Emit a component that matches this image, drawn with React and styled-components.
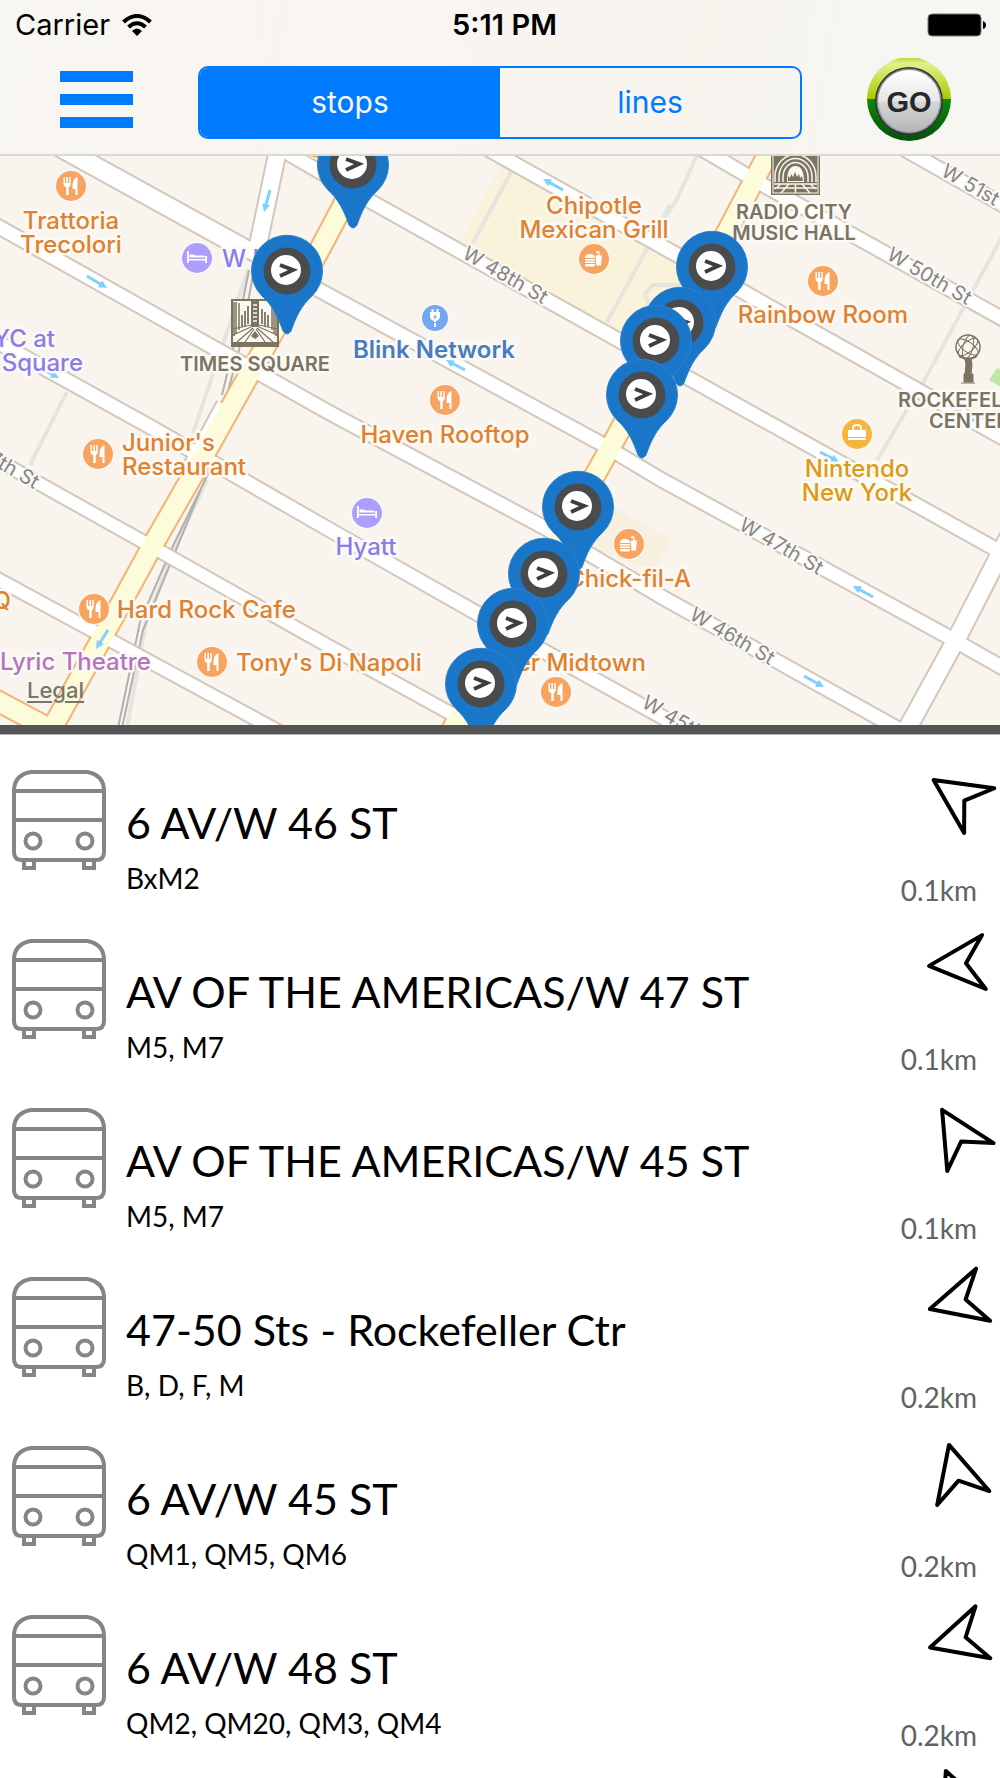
import React, { useState } from "react";
import styled, { createGlobalStyle } from "styled-components";

const GlobalStyle = createGlobalStyle`
  *, *::before, *::after { box-sizing: border-box; }
  body { margin: 0; background: #fff; overflow-x: hidden; }
`;

const ui = `Inter, Roboto, "Liberation Sans", sans-serif`;
const book = `Lato, "Open Sans", "Liberation Sans", sans-serif`;

const Screen = styled.div`
  height: 100vh;
  overflow: hidden;
  display: flex;
  flex-direction: column;
  background: #fff;
`;

const Header = styled.header`
  flex: none;
  background: linear-gradient(100deg, #f8f6f0, #f8f5f2 40%, #f8f5ef 70%, #f7f6f3);
  border-bottom: 2px solid #dad8d4;
`;

const StatusBar = styled.div`
  height: 50px;
  padding: 0 14px 0 15px;
  display: grid;
  grid-template-columns: 1fr auto 1fr;
  align-items: center;
  font: 400 29px/50px ${ui};
  color: #000;
`;

const Carrier = styled.span`
  display: flex;
  align-items: center;
  gap: 12px;
`;

const Clock = styled.time`
  margin-left: 8px;
  font-weight: 600;
`;

const BatteryIcon = styled.svg`
  justify-self: end;
`;

const Toolbar = styled.div`
  height: 104px;
  display: grid;
  grid-template-columns: 198px 1fr 198px;
  align-items: center;
`;

const MenuButton = styled.button`
  justify-self: start;
  margin: 0 0 6px 60px;
  padding: 0;
  border: 0;
  background: none;
  display: flex;
  flex-direction: column;
  gap: 12px;
  width: 73px;
`;

const MenuBar = styled.span`
  height: 11px;
  background: #007aff;
`;

const Segments = styled.div`
  height: 73px;
  display: grid;
  grid-template-columns: 1fr 1fr;
  border: 2px solid #007aff;
  border-radius: 10px;
  overflow: hidden;
`;

const Segment = styled.button`
  border: 0;
  padding: 0;
  font: 400 30px/36px ${ui};
  color: ${(p) => (p.$on ? "#f8f6f2" : "#007aff")};
  background: ${(p) => (p.$on ? "#007aff" : "transparent")};
`;

const GoButton = styled.button`
  justify-self: center;
  margin: 0 0 3px 16px;
  padding: 0;
  border: 0;
  background: none;
  display: flex;
`;

const MapPanel = styled.section`
  flex: none;
  position: relative;
  height: 569px;
  background: #f9f5ee;
`;

const MapDrawing = styled.svg`
  display: block;
  width: 100%;
  height: 100%;
  font-family: ${ui};
`;

const Legal = styled.a`
  position: absolute;
  left: 27px;
  bottom: 21px;
  font: 500 22px/28px ${ui};
  color: #77756d;
  text-decoration: underline;
  text-underline-offset: 3px;
`;

const Divider = styled.div`
  flex: none;
  height: 10px;
  background: #545454;
  border-bottom: 1px solid #b5b5b5;
`;

const StopList = styled.ul`
  flex: 1;
  min-height: 0;
  overflow: hidden;
  margin: 0;
  padding: 0;
  list-style: none;
  font-family: ${book};
`;

const StopRow = styled.li`
  height: 169px;
  padding: 30px 5px 0 10px;
  display: grid;
  grid-template-columns: 97px 1fr 100px;
  column-gap: 19px;
`;

const BusIcon = styled.svg`
  margin-top: 5px;
`;

const StopText = styled.div`
  padding-top: 30px;
  min-width: 0;
`;

const StopName = styled.h2`
  margin: 0;
  font-weight: 400;
  font-size: 43px;
  line-height: 56px;
  color: #000;
  white-space: nowrap;
`;

const StopLines = styled.p`
  margin: 0;
  font-weight: 400;
  font-size: 28px;
  line-height: 54px;
  color: #000;
`;

const Side = styled.div`
  display: flex;
  flex-direction: column;
`;

const Needle = styled.svg`
  flex: none;
  margin: ${(p) => -10 - p.$lift}px -1px 0 21px;
  overflow: visible;
`;

const Distance = styled.span`
  margin-top: 37px;
  margin-right: 18px;
  text-align: right;
  font-weight: 400;
  font-size: 28px;
  line-height: 36px;
  color: #626262;
`;

const stops = [
  { name: "6 AV/W 46 ST", lines: "BxM2", far: "0.1km", turn: -56 },
  { name: "AV OF THE AMERICAS/W 47 ST", lines: "M5, M7", far: "0.1km", turn: -94 },
  { name: "AV OF THE AMERICAS/W 45 ST", lines: "M5, M7", far: "0.1km", turn: -31 },
  { name: "47-50 Sts - Rockefeller Ctr", lines: "B, D, F, M", far: "0.2km", turn: -105 },
  { name: "6 AV/W 45 ST", lines: "QM1, QM5, QM6", far: "0.2km", turn: -15 },
  { name: "6 AV/W 48 ST", lines: "QM2, QM20, QM3, QM4", far: "0.2km", turn: -106 },
  { turn: -22, lift: 13 },
];

/* ---------- map data ---------- */

const streets = [
  ["40,136 330,296 600,443 660,479 945,635 1010,672", 15],
  ["40,136 250,252", 20],
  ["-10,222 330,413 547,529 660,596 920,741", 15],
  ["-10,338 147,425 330,530 480,615 547,653 700,738", 15],
  ["-10,456 140,540 330,647 450,713 480,730", 14],
  ["-10,575 95,632 300,743", 14],
  ["255,134 370,201 622,342 690,379 990,546 1010,557", 15],
  ["470,139 670,251 740,290 1010,442", 15],
  ["690,142 765,186 1010,323", 15],
  ["890,141 1010,209", 15],
  ["279,145 257,250", 18],
  ["1015,525 957,638 900,742", 19],
  ["225,405 190,470", 18],
];

const avenues = [
  "375,145 321,247 265,347 245,382 190,480 155,541 102,638 50,732",
  "-10,697 50,729",
  "770,150 728,230 608,452 561,535 450,733",
];

const paths = [
  "248,270 193,433",
  "67,392 30,465",
  "512,170 473,243",
  "670,205 648,247 607,322",
  "680,285 653,285 645,294 649,306",
  "697,155 678,197 664,220",
  "1004,233 923,383 877,460",
  "207,480 174,550 146,622 127,728",
];

const arrows = [
  [270, 190, 264, 212],
  [87, 276, 107, 288],
  [40, 368, 59, 378],
  [563, 190, 543, 179],
  [465, 370, 446, 360],
  [108, 630, 96, 649],
  [820, 452, 839, 462],
  [873, 597, 853, 586],
  [804, 676, 824, 687],
  [975, 421, 953, 410],
];

const streetNames = [
  ["W 48th St", 506, 274],
  ["W 47th St", 782, 545],
  ["W 46th St", 733, 635],
  ["W 45th St", 685, 723],
  ["W 50th St", 930, 275],
  ["W 51st St", 982, 190],
  ["W 47th St", -2, 459],
];

const food = "#e0812f";
const hotel = "#8b7ce8";
const sight = "#7b7461";

const labels = [
  [["Trattoria", "Trecolori"], 71, 229, "middle", food],
  [["W H"], 222, 267, "start", hotel],
  [["YC at"], 55, 347, "end", hotel],
  [["Square"], 83, 371, "end", hotel],
  [["Blink Network"], 434, 358, "middle", "#4a7cc0", 600],
  [["Haven Rooftop"], 445, 443, "middle", food],
  [["Junior's", "Restaurant"], 122, 451, "start", food],
  [["Chipotle", "Mexican Grill"], 594, 214, "middle", food],
  [["Rainbow Room"], 823, 323, "middle", food],
  [["Nintendo", "New York"], 857, 477, "middle", "#dc9a12"],
  [["Hyatt"], 366, 555, "middle", hotel],
  [["Hard Rock Cafe"], 117, 618, "start", food],
  [["Tony's Di Napoli"], 236, 671, "start", food],
  [["Lyric Theatre"], 0, 670, "start", "#b673c0"],
  [["Q"], 11, 609, "end", food],
  [["Chick-fil-A"], 691, 587, "end", food],
  [["er Midtown"], 646, 671, "end", food],
  [["TIMES SQUARE"], 255, 371, "middle", sight, 600, 20],
  [["RADIO CITY", "MUSIC HALL"], 794, 219, "middle", sight, 600, 20],
  [["ROCKEFELLER"], 898, 407, "start", sight, 600, 20],
  [["CENTER"], 929, 428, "start", sight, 600, 20],
];

const pois = [
  ["fork", 71, 186], ["fork", 445, 400], ["fork", 98, 454], ["fork", 823, 281],
  ["fork", 94, 609], ["fork", 212, 662], ["fork", 556, 692],
  ["burger", 594, 259], ["burger", 629, 544],
  ["bed", 197, 258], ["bed", 367, 513],
  ["plug", 435, 318], ["bag", 857, 434], ["bag", 318, 143],
];

const pins = [
  [353, 165], [287, 271], [712, 267], [680, 323], [656, 341],
  [642, 395], [578, 507], [544, 574], [513, 624], [481, 684],
];

const poiColor = { fork: "#f7a461", burger: "#f7a461", bed: "#ac9ffb", plug: "#73a7f0", bag: "#f6b63e" };

const Glyph = ({ kind }) => {
  if (kind === "fork")
    return (
      <g fill="#fff">
        <path d="M-7.500-9h1.500v6h1.300v-6h1.600v6h1.300v-6h1.500v7q0 2.500-2 3.200v7.800h-2.500v-7.800q-2.700-.7-2.700-3.200z" />
        <path d="M6.500-9v18h-2v-6h-3v-3q0-7 5-9z" />
      </g>
    );
  if (kind === "burger")
    return (
      <g fill="#fff">
        <path d="M-9-1q0-4 5-4t5 4zM-9 0h10v1.500h-10zM-9 2.500h10v1.500h-10zM-9 5h10v1q0 1.500-1.500 1.500h-7q-1.500 0-1.500-1.500z" />
        <path d="M1.500-3.500h6.500l-1 10h-4.500z" />
        <path d="M5-3l-.5-4h-2.500" fill="none" stroke="#fff" strokeWidth="1.500" />
      </g>
    );
  if (kind === "bed")
    return (
      <g fill="#fff">
        <path d="M-10-7h1.800v8h16.400v-3h1.800v7h-1.800v-2.500h-16.400v2.500h-1.800z" />
        <path d="M-7.500-3.500h4.500l1 1h8q2 0 2 2h-15.500z" />
      </g>
    );
  if (kind === "plug")
    return (
      <g fill="#fff">
        <path d="M-3.500-9h2v3h3v-3h2v3h1.500v4q0 4-4 5v1h-2v-1q-4-1-4-5v-4h1.500zM-1 5h2v4h-2z" />
        <path d="M1-4.500l-3 4h2l-1 3 3-4h-2z" fill="#73a7f0" />
      </g>
    );
  return (
    <g fill="#fff">
      <path d="M-9-4h18v7h-18zM-9 4h18v2h-18z" />
      <path d="M-4-4v-2q0-3 4-3t4 3v2" fill="none" stroke="#fff" strokeWidth="1.800" />
    </g>
  );
};

const TimesSquare = () => (
  <g transform="translate(231 299)">
    <rect width="48" height="48" fill={sight} />
    <rect x="2" y="2" width="44" height="41" fill="#fbf8f1" />
    <g stroke={sight} fill="none">
      <path d="M3 3v34M5 3v32M8 4v27M41 4v27M43 3v32M45 3v34" strokeWidth="1.500" />
      <path d="M11 16v12M14 12v15M17 7v18M31 10v15M34 13v14M37 16v12" strokeWidth="1.800" />
      <path d="M2 30l18-4M46 30l-18-4M2 36l18-8M46 36l-18-8M6 43l16-14M42 43L26 29M14 43l9-13M34 43l-9-13" strokeWidth="1.200" />
    </g>
    <path d="M20 2h8v26h-8z" fill={sight} />
    <path d="M22 6h4M22 10h4M22 14h4M22 18h4M22 22h4" stroke="#fbf8f1" strokeWidth="1.500" />
    <path d="M20 37l4-5 4 5-4 3z" fill={sight} />
  </g>
);

const RadioCity = () => (
  <g transform="translate(771 147)">
    <rect width="49" height="48" fill={sight} />
    <rect x="2" y="2" width="45" height="44" fill="none" stroke="#fbf8f1" strokeWidth="1" />
    <g fill="none" stroke="#fbf8f1" strokeWidth="1.500">
      <path d="M4 35V30a20 22 0 0 1 41 0V35M8 35V30a16 18 0 0 1 33 0V35M12 35V30a12 14 0 0 1 25 0V35" />
      <path d="M3 37h43M3 41h43M18 37l-8 9M31 37l8 9M24.500 37v9M10 37l-6 5M39 37l6 5" />
    </g>
    <path d="M16 35q0-16 8.500-16t8.500 16z" fill="#fbf8f1" />
    <path d="M17 34v-5l2 2 1-4 2 3 2-5 2 5 2-3 1 4 2-2 1 5z" fill={sight} />
  </g>
);

const Atlas = () => (
  <g transform="translate(968 347)" fill="none" stroke={sight} strokeWidth="1">
    <circle r="12" fill="#fbf8f1" strokeWidth="1.500" />
    <ellipse rx="12" ry="5" transform="rotate(35)" />
    <ellipse rx="12" ry="5" transform="rotate(-40)" />
    <ellipse rx="5" ry="12" transform="rotate(15)" />
    <path d="M-9 9L0 13L9 9" strokeWidth="2" />
    <path d="M-3 11h6l1 7-1 9h-6l1-9z" fill={sight} />
    <path d="M-4 27h9v8h-9z" fill={sight} />
    <path d="M-7 36h14" />
  </g>
);

const CityMap = () => (
  <MapDrawing viewBox="0 156 1000 569" preserveAspectRatio="xMidYMid slice" role="img" aria-label="Stops near Times Square">
    <rect x="-500" y="100" width="2000" height="700" fill="#f9f5ee" />
    <polygon points="502,165 700,265 640,350 460,242" fill="#faf2db" />
    <polygon points="600,500 672,540 654,572 585,545" fill="#f7efe0" />
    <polygon points="997,368 989,380 1004,389 1012,374" fill="#bfe8a8" />
    <g fill="none" stroke="#e4e6dd" strokeWidth="4">
      {paths.map((d) => <polyline key={d} points={d} />)}
    </g>
    <g fill="none" stroke="#b1b0ae" strokeWidth="2">
      <path d="M249 270L234 345L222 395M254 270L239 350L227 395" />
      <path d="M210 470L171 550L140 622L118 728M207 474L176 550L143 630L122 728" />
    </g>
    <g fill="none" stroke="#d1c7bc" strokeLinejoin="round">
      {streets.map(([d, w]) => <polyline key={d} points={d} strokeWidth={w + 2} />)}
    </g>
    <g fill="none" stroke="#f6b273" strokeLinejoin="miter">
      {avenues.map((d) => <polyline key={d} points={d} strokeWidth="23" />)}
    </g>
    <g fill="none" stroke="#fff" strokeLinejoin="round">
      {streets.map(([d, w]) => <polyline key={d} points={d} strokeWidth={w - 2} />)}
    </g>
    <g fill="none" stroke="#fcfbda" strokeLinejoin="miter">
      {avenues.map((d) => <polyline key={d} points={d} strokeWidth="19" />)}
    </g>
    <g stroke="#80d0ff" fill="#80d0ff" strokeWidth="3">
      {arrows.map(([x1, y1, x2, y2]) => (
        <g key={`${x1}-${y1}`} transform={`translate(${x2} ${y2}) rotate(${(Math.atan2(y2 - y1, x2 - x1) * 180) / Math.PI})`}>
          <path d={`M${-Math.hypot(x2 - x1, y2 - y1)} 0H-5`} />
          <path d="M0 0L-8 -4V4Z" stroke="none" />
        </g>
      ))}
    </g>
    <g fill="#858585" fontSize="20" stroke="#fbf9f5" strokeWidth="4" paintOrder="stroke" textAnchor="middle">
      {streetNames.map(([t, x, y]) => (
        <text key={t + x} transform={`translate(${x} ${y}) rotate(30)`} dy="8">{t}</text>
      ))}
    </g>
    <TimesSquare />
    <RadioCity />
    <Atlas />
    {pois.map(([kind, x, y]) => (
      <g key={`${x}-${y}`} transform={`translate(${x} ${y})`}>
        <circle r={kind === "plug" ? 13 : 15} fill={poiColor[kind]} stroke="#fdfbf8" strokeWidth="2" paintOrder="stroke" />
        <Glyph kind={kind} />
      </g>
    ))}
    <g stroke="#fcfaf6" strokeWidth="5" strokeLinejoin="round" paintOrder="stroke">
      {labels.map(([lines, x, y, anchor, fill, weight = 500, size = 24]) => (
        <text key={lines[0]} y={y} textAnchor={anchor} fill={fill} fontWeight={weight} fontSize={size}>
          {lines.map((line, i) => (
            <tspan key={line} x={x} dy={i ? (size === 24 ? 24 : 21) : 0}>{line}</tspan>
          ))}
        </text>
      ))}
    </g>
    {pins.map(([x, y]) => (
      <g key={`${x}-${y}`} transform={`translate(${x} ${y})`}>
        <path
          d="M-25 25A35.500 35.500 0 1 1 25 25C14 35 9 46 4 60Q0 66 -4 60C-9 46 -14 35 -25 25Z"
          fill="#1976c8"
          stroke="#2a83d0"
          strokeWidth="1"
        />
        <circle r="23.500" fill="#4a4b4d" />
        <circle cx="-1" cy="-1" r="15" fill="#fff" />
        <path d="M-7 -6L6 -1L-7 5" fill="none" stroke="#3d3e40" strokeWidth="4" />
      </g>
    ))}
  </MapDrawing>
);

const GoBadge = () => (
  <svg width="84" height="86" viewBox="-42 -43 84 86" aria-hidden="true">
    <defs>
      <linearGradient id="lime" x1="0" y1="0" x2="0" y2="1">
        <stop offset="0" stopColor="#b5d334" />
        <stop offset=".15" stopColor="#e2f08c" />
        <stop offset="1" stopColor="#a5cc00" />
      </linearGradient>
      <linearGradient id="forest" x1="0" y1="0" x2="0" y2="1">
        <stop offset="0" stopColor="#0a8a0a" />
        <stop offset="1" stopColor="#04500c" />
      </linearGradient>
      <linearGradient id="silver" x1="0" y1="0" x2="0" y2="1">
        <stop offset="0" stopColor="#ffffff" />
        <stop offset=".5" stopColor="#e6e6e6" />
        <stop offset=".52" stopColor="#d6d6d6" />
        <stop offset="1" stopColor="#b4b6b6" />
      </linearGradient>
    </defs>
    <path d="M-42 -2A42 42 0 0 1 42 -2Z" fill="url(#lime)" />
    <path d="M-42 -2A42 42 0 1 0 42 -2Z" fill="url(#forest)" />
    <circle r="34" fill="#2f3134" />
    <circle r="32.500" fill="#8c8e92" />
    <circle r="31" fill="url(#silver)" />
    <text y="11" textAnchor="middle" fontFamily="Liberation Sans, Arial, sans-serif" fontWeight="700" fontSize="29" fill="#27282a">GO</text>
  </svg>
);

const Bus = () => (
  <BusIcon width="97" height="102" viewBox="0 0 97 102" fill="none" stroke="#858585" strokeWidth="4" aria-hidden="true">
    <path d="M21 2H77Q94 5 94 21V82Q94 90 86 90H12Q4 90 4 82V21Q4 5 21 2Z" />
    <path d="M4 21H94M4 50H94" />
    <circle cx="23" cy="71" r="7.500" />
    <circle cx="75" cy="71" r="7.500" />
    <path d="M14 90V98H24V90M74 90V98H84V90" />
  </BusIcon>
);

export default function App() {
  const [tab, setTab] = useState("stops");
  return (
    <Screen>
      <GlobalStyle />
      <Header>
        <StatusBar>
          <Carrier>
            Carrier
            <svg width="30" height="22" viewBox="0 0 30 22" fill="none" stroke="#000" strokeWidth="4" aria-hidden="true">
              <path d="M1.500 8Q15 -4 28.500 8" />
              <path d="M6.500 13Q15 5.500 23.500 13" />
              <path d="M10 17Q15 12 20 17L15 22Z" fill="#000" stroke="none" />
            </svg>
          </Carrier>
          <Clock>5:11 PM</Clock>
          <BatteryIcon width="59" height="24" viewBox="0 0 59 24" aria-hidden="true">
            <rect x="1" y="1" width="53" height="22" rx="4" fill="#000" stroke="#777" strokeWidth="1" />
            <path d="M56 8Q59 9 59 12T56 16Z" fill="#000" />
          </BatteryIcon>
        </StatusBar>
        <Toolbar>
          <MenuButton aria-label="Menu">
            <MenuBar />
            <MenuBar />
            <MenuBar />
          </MenuButton>
          <Segments>
            <Segment $on={tab === "stops"} onClick={() => setTab("stops")}>stops</Segment>
            <Segment $on={tab === "lines"} onClick={() => setTab("lines")}>lines</Segment>
          </Segments>
          <GoButton aria-label="GO"><GoBadge /></GoButton>
        </Toolbar>
      </Header>
      <MapPanel>
        <CityMap />
        <Legal href="#legal">Legal</Legal>
      </MapPanel>
      <Divider />
      <StopList>
        {stops.map((s) => (
          <StopRow key={s.turn}>
            <Bus />
            <StopText>
              {s.name && <StopName>{s.name}</StopName>}
              {s.lines && <StopLines>{s.lines}</StopLines>}
            </StopText>
            <Side>
              <Needle $lift={s.lift || 0} width="80" height="80" viewBox="-40 -40 80 80" fill="none" stroke="#000" strokeWidth="4" strokeLinejoin="round" aria-hidden="true">
                <path d="M0 -27L27 28L0 10L-27 28Z" transform={`rotate(${s.turn})`} />
              </Needle>
              {s.far && <Distance>{s.far}</Distance>}
            </Side>
          </StopRow>
        ))}
      </StopList>
    </Screen>
  );
}
